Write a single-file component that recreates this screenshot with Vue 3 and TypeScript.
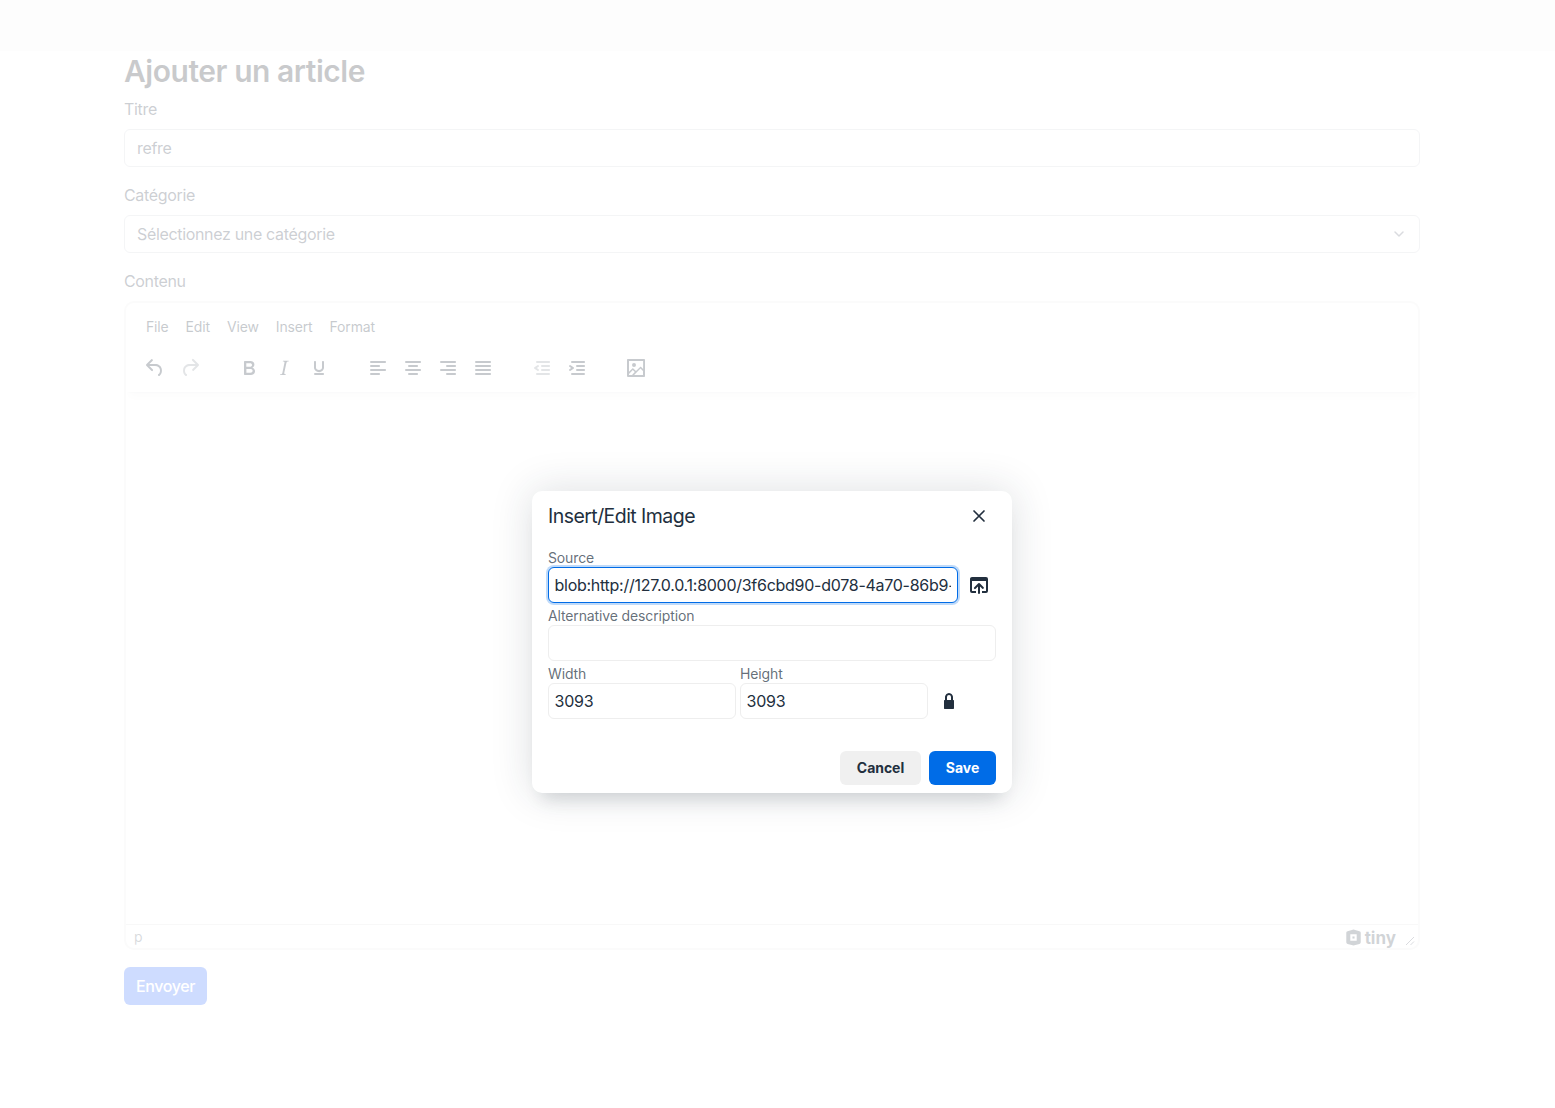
<script setup lang="ts">
interface Tool { d: string; off?: boolean; w?: number }
const A = 'M5 5h14c.6 0 1 .4 1 1s-.4 1-1 1H5a1 1 0 1 1 0-2Z'
const menus: string[] = ['File', 'Edit', 'View', 'Insert', 'Format']
const groups: Tool[][] = [
  [
    { d: 'M6.4 8H12c3.7 0 6.2 2 6.8 5.1.6 2.7-.4 5.6-2.3 6.8a1 1 0 0 1-1-1.8c1.1-.6 1.8-2.7 1.4-4.6-.5-2.1-2.1-3.5-4.9-3.5H6.4l3.3 3.3a1 1 0 1 1-1.4 1.4l-5-5a1 1 0 0 1 0-1.4l5-5a1 1 0 0 1 1.4 1.4L6.4 8Z' },
    { d: 'M17.6 10H12c-2.8 0-4.4 1.4-4.9 3.5-.4 2 .3 4 1.4 4.6a1 1 0 1 1-1 1.8c-2-1.2-2.9-4.1-2.3-6.8.6-3 3-5.1 6.8-5.1h5.6l-3.3-3.3a1 1 0 1 1 1.4-1.4l5 5a1 1 0 0 1 0 1.4l-5 5a1 1 0 0 1-1.4-1.4l3.3-3.3Z', off: true },
  ],
  [
    { d: 'M7.8 19c-.3 0-.5 0-.6-.2l-.2-.5V5.7c0-.2 0-.4.2-.5l.6-.2h5c1.5 0 2.7.3 3.5 1 .7.6 1.1 1.4 1.1 2.5a3 3 0 0 1-.6 1.9c-.4.6-1 1-1.6 1.2.4.1.9.3 1.3.6s.8.7 1 1.2c.4.4.5 1 .5 1.6 0 1.3-.4 2.3-1.3 3-.8.7-2.1 1-3.8 1H7.8Zm5-8.3c.6 0 1.2-.1 1.6-.5.4-.3.6-.7.6-1.3 0-1.1-.8-1.7-2.3-1.7H9.3v3.5h3.4Zm.5 6c.7 0 1.3-.1 1.7-.4.4-.4.6-.9.6-1.5s-.2-1-.7-1.4c-.4-.3-1-.4-2-.4H9.4v3.8h4Z' },
    { d: 'm16.7 4.7-.1.9h-.3c-.6 0-1 0-1.4.3-.3.3-.4.6-.5 1.1l-2.1 9.8v.6c0 .5.4.8 1.4.8h.2l-.2.8H8l.2-.8h.2c1.1 0 1.8-.5 2-1.5l2-9.8.1-.5c0-.6-.4-.8-1.4-.8h-.3l.2-.9h5.8Z' },
    { d: 'M16 5c.6 0 1 .4 1 1v5.5a4 4 0 0 1-.4 1.8l-1 1.4a5.3 5.3 0 0 1-5.5 1 5 5 0 0 1-1.6-1c-.5-.4-.8-.9-1.1-1.4a4 4 0 0 1-.4-1.8V6c0-.6.4-1 1-1s1 .4 1 1v5.5c0 .3 0 .6.2 1l.6.7a3.3 3.3 0 0 0 2.2.8 3.4 3.4 0 0 0 2.2-.8c.3-.2.4-.5.6-.8l.2-.9V6c0-.6.4-1 1-1ZM8 17h8c.6 0 1 .4 1 1s-.4 1-1 1H8a1 1 0 0 1 0-2Z' },
  ],
  [
    { d: A + 'M5 9h8c.6 0 1 .4 1 1s-.4 1-1 1H5a1 1 0 1 1 0-2Zm0 8h8c.6 0 1 .4 1 1s-.4 1-1 1H5a1 1 0 0 1 0-2Zm0-4h14c.6 0 1 .4 1 1s-.4 1-1 1H5a1 1 0 0 1 0-2Z' },
    { d: A + 'M8 9h8c.6 0 1 .4 1 1s-.4 1-1 1H8a1 1 0 1 1 0-2Zm0 8h8c.6 0 1 .4 1 1s-.4 1-1 1H8a1 1 0 0 1 0-2Zm-3-4h14c.6 0 1 .4 1 1s-.4 1-1 1H5a1 1 0 0 1 0-2Z' },
    { d: A + 'M11 9h8c.6 0 1 .4 1 1s-.4 1-1 1h-8a1 1 0 0 1 0-2Zm0 8h8c.6 0 1 .4 1 1s-.4 1-1 1h-8a1 1 0 0 1 0-2Zm-6-4h14c.6 0 1 .4 1 1s-.4 1-1 1H5a1 1 0 0 1 0-2Z' },
    { d: A + 'M5 9h14c.6 0 1 .4 1 1s-.4 1-1 1H5a1 1 0 1 1 0-2Zm0 4h14c.6 0 1 .4 1 1s-.4 1-1 1H5a1 1 0 0 1 0-2Zm0 4h14c.6 0 1 .4 1 1s-.4 1-1 1H5a1 1 0 0 1 0-2Z' },
  ],
  [
    { d: 'M7 5h12c.6 0 1 .4 1 1s-.4 1-1 1H7a1 1 0 1 1 0-2Zm5 4h7c.6 0 1 .4 1 1s-.4 1-1 1h-7a1 1 0 0 1 0-2Zm0 4h7c.6 0 1 .4 1 1s-.4 1-1 1h-7a1 1 0 0 1 0-2Zm-5 4h12a1 1 0 0 1 0 2H7a1 1 0 0 1 0-2Zm1.6-3.8a1 1 0 0 1-1.2 1.6l-3-2a1 1 0 0 1 0-1.6l3-2a1 1 0 0 1 1.2 1.6L6.8 12l1.8 1.2Z', off: true },
    { d: 'M7 5h12c.6 0 1 .4 1 1s-.4 1-1 1H7a1 1 0 1 1 0-2Zm5 4h7c.6 0 1 .4 1 1s-.4 1-1 1h-7a1 1 0 0 1 0-2Zm0 4h7c.6 0 1 .4 1 1s-.4 1-1 1h-7a1 1 0 0 1 0-2Zm-5 4h12a1 1 0 0 1 0 2H7a1 1 0 0 1 0-2Zm-2.6-3.8L6.2 12l-1.8-1.2a1 1 0 0 1 1.2-1.6l3 2a1 1 0 0 1 0 1.6l-3 2a1 1 0 1 1-1.2-1.6Z' },
  ],
  [
    { d: 'm5 15.7 3.3-3.2c.3-.3.7-.3 1 0L12 15l4.1-4c.3-.4.8-.4 1 0l2 1.9V5H5v10.7ZM5 18V19h3l2.8-2.9-2-2L5 17.9Zm14-3-2.5-2.4-6.4 6.5H19v-4ZM4 3h16c.6 0 1 .4 1 1v16c0 .6-.4 1-1 1H4a1 1 0 0 1-1-1V4c0-.6.4-1 1-1Zm6 8a2 2 0 1 0 0-4 2 2 0 0 0 0 4Z' },
  ],
]
</script>

<template>
  <div class="page">
    <header class="topbar"></header>
    <main class="content">
      <h1 class="title">Ajouter un article</h1>
      <label class="label">Titre</label>
      <input class="field" value="refre" readonly />
      <label class="label">Catégorie</label>
      <div class="field select">
        <span>Sélectionnez une catégorie</span>
        <svg width="20" height="20" viewBox="0 0 20 20" fill="none">
          <path d="M6 8l4 4 4-4" stroke="#6b7280" stroke-width="1.5" stroke-linecap="round" stroke-linejoin="round" />
        </svg>
      </div>
      <label class="label">Contenu</label>
      <div class="editor">
        <div class="editor-head">
          <nav class="menubar">
            <span v-for="m in menus" :key="m">{{ m }}</span>
          </nav>
          <div class="toolbar">
            <div v-for="(g, i) in groups" :key="i" class="tool-group">
              <span v-for="(t, j) in g" :key="j" class="tool" :class="{ off: t.off }">
                <svg width="24" height="24" viewBox="0 0 24 24"><path :d="t.d" fill="currentColor" fill-rule="evenodd" /></svg>
              </span>
            </div>
          </div>
        </div>
        <div class="editor-body"></div>
        <div class="statusbar">
          <span class="path">p</span>
          <span class="brand">
            <svg width="17" height="17" viewBox="0 0 16 16">
              <path d="M8 .5 13.6 2a1.6 1.6 0 0 1 1.2 1.6v8.8a1.6 1.6 0 0 1-1.2 1.6L8 15.5 2.4 14a1.6 1.6 0 0 1-1.2-1.6V3.600A1.600 1.600 0 0 1 2.400 2L8 .5ZM5 5v6h6V5H5Z" fill="currentColor" fill-rule="evenodd" />
              <rect x="7" y="7" width="2" height="2" fill="currentColor" />
            </svg>
            <span>tiny</span>
          </span>
          <svg class="grip" width="10" height="10" viewBox="0 0 10 10">
            <path d="M1 9 9 1M5.500 9 9 5.500" stroke="currentColor" stroke-width="1" fill="none" />
          </svg>
        </div>
      </div>
      <button class="send" type="button">Envoyer</button>
    </main>

    <div class="backdrop"></div>

    <section class="dialog">
      <div class="dialog-head">
        <h2>Insert/Edit Image</h2>
        <svg class="close" width="24" height="24" viewBox="0 0 24 24"><path d="M7 7 17 17M17 7 7 17" stroke="currentColor" stroke-width="1.7" stroke-linecap="round" fill="none" /></svg>
      </div>
      <div class="dialog-body">
        <label class="dlabel">Source</label>
        <div class="source-row">
          <input class="dinput focus" value="blob:http://127.0.0.1:8000/3f6cbd90-d078-4a70-86b9-4f1e5c2a7d10" readonly />
          <span class="icon-btn">
            <svg width="24" height="24" viewBox="0 0 24 24"><path d="M19 4a2 2 0 0 1 2 2v12a2 2 0 0 1-2 2h-4v-2h4V8H5v10h4v2H5a2 2 0 0 1-2-2V6c0-1.100.9-2 2-2h14Zm-8 9.400-2.300 2.300a1 1 0 1 1-1.400-1.400l4-4a1 1 0 0 1 1.400 0l4 4a1 1 0 0 1-1.400 1.400L13 13.400V20a1 1 0 0 1-2 0v-6.600Z" fill="currentColor" fill-rule="evenodd" /></svg>
          </span>
        </div>
        <label class="dlabel">Alternative description</label>
        <input class="dinput" value="" readonly />
        <div class="size-row">
          <div class="size-cell">
            <label class="dlabel">Width</label>
            <input class="dinput" value="3093" readonly />
          </div>
          <div class="size-cell">
            <label class="dlabel">Height</label>
            <input class="dinput" value="3093" readonly />
          </div>
          <span class="lock">
            <svg width="24" height="24" viewBox="0 0 24 24"><path d="M16.300 11c.2 0 .3 0 .5.2l.2.6v7.400c0 .3 0 .4-.2.6l-.6.2H7.800c-.3 0-.4 0-.6-.2a.7.7 0 0 1-.2-.6v-7.400c0-.3 0-.4.2-.6l.5-.2H8V8c0-.8.3-1.500.7-2.100.5-.7 1-1.200 1.700-1.500a4 4 0 0 1 3.200 0c.7.3 1.200.8 1.700 1.500.4.6.7 1.300.7 2v3h.3ZM10 8v3h4V8a2 2 0 0 0-2-2 2 2 0 0 0-2 2Z" fill="currentColor" fill-rule="evenodd" /></svg>
          </span>
        </div>
      </div>
      <div class="dialog-foot">
        <button class="btn cancel" type="button">Cancel</button>
        <button class="btn save" type="button">Save</button>
      </div>
    </section>
  </div>
</template>

<style>
html, body { margin: 0; background: #fff; }
</style>

<style scoped>
.page {
  position: relative;
  height: 1108px;
  overflow: hidden;
  font-family: Inter, "Noto Sans", sans-serif;
  color: #111827;
}
.topbar { height: 51px; background: #f8f8f8; }
.content { width: 1296px; margin-left: 124px; display: flex; flex-direction: column; }
.title { margin: 2px 0 8px; font-size: 30px; line-height: 36px; font-weight: 600; letter-spacing: -0.46px; color: #2b2f36; }
.label { display: block; font-size: 16px; line-height: 24px; color: #374151; margin-bottom: 8px; letter-spacing: -0.33px; }
.field {
  box-sizing: border-box;
  width: 100%;
  height: 38px;
  padding: 0 12px;
  margin: 0 0 16px;
  border: 1px solid #d1d5db;
  border-radius: 6px;
  background: #fff;
  font: 16px/24px Inter, sans-serif;
  letter-spacing: -0.33px;
  color: #374151;
  outline: none;
}
.select { display: flex; align-items: center; justify-content: space-between; color: #374151; padding-right: 10px; }
.editor {
  box-sizing: border-box;
  height: 649px;
  border: 2px solid #eee;
  border-radius: 10px;
  display: flex;
  flex-direction: column;
  overflow: hidden;
  color: #222f3e;
}
.editor-head { height: 89px; box-shadow: 0 2px 2px -2px rgba(34, 47, 62, .1), 0 8px 8px -4px rgba(34, 47, 62, .07); padding-top: 4px; box-sizing: border-box; }
.menubar { display: flex; gap: 17px; padding-left: 20px; height: 40px; align-items: center; font-size: 14px; line-height: 20px; letter-spacing: -0.15px; }
.toolbar { display: flex; gap: 25px; padding: 4px 0 0 12px; }
.tool-group { display: flex; gap: 1px; }
.tool { width: 34px; height: 34px; display: flex; align-items: center; justify-content: center; color: #222f3e; }
.tool.off { color: rgba(34, 47, 62, .5); }
.editor-body { flex: 1; }
.statusbar {
  height: 24px;
  box-sizing: border-box;
  border-top: 1px solid #e3e3e3;
  display: flex;
  align-items: center;
  padding: 0 3px 0 8px;
  font-size: 14px;
  color: rgba(34, 47, 62, .7);
}
.path { flex: 1; }
.brand { display: flex; align-items: center; gap: 2.500px; font-size: 17px; font-weight: 700; color: #4a5562; margin: 2px 9px 0 0; }
.grip { color: #6b7280; margin-top: 8px; }
.send {
  width: 83px;
  height: 38px;
  margin-top: 17px;
  border: 0;
  border-radius: 6px;
  background: #3f74ff;
  color: #fff;
  font: 500 16px/24px Inter, sans-serif;
  letter-spacing: -0.4px;
  padding: 0;
}
.backdrop { position: absolute; inset: 0; background: rgba(255, 255, 255, .75); }
.dialog {
  position: absolute;
  left: 532px;
  top: 491px;
  width: 480px;
  height: 302px;
  box-sizing: border-box;
  background: #fff;
  border-radius: 10px;
  box-shadow: 0 16px 16px -10px rgba(34, 47, 62, .15), 0 0 40px 1px rgba(34, 47, 62, .15);
  color: #222f3e;
  display: flex;
  flex-direction: column;
}
.dialog-head { display: flex; align-items: center; justify-content: space-between; padding: 8px 21px 0 16px; height: 42px; box-sizing: border-box; margin-bottom: 16px; }
.dialog-head h2 { margin: 0; font-size: 19.5px; line-height: 34px; font-weight: 400; letter-spacing: -0.55px; }
.close { display: block; }
.dialog-body { padding: 0 16px; flex: 1; }
.dlabel { display: block; font-size: 14px; line-height: 17px; color: rgba(34, 47, 62, .7); margin-bottom: 1px; letter-spacing: -0.13px; }
.dinput {
  display: block;
  box-sizing: border-box;
  width: 100%;
  height: 36px;
  padding: 5px 6px 5px 5.500px;
  border: 1px solid #eee;
  border-radius: 6px;
  background: #fff;
  font: 16px/24px Inter, sans-serif;
  letter-spacing: -0.23px;
  color: #222f3e;
  outline: none;
  margin: 0 0 4px;
}
.dinput.focus { border-color: #006ce7; box-shadow: 0 0 0 2px rgba(0, 108, 231, .25); letter-spacing: -0.27px; }
.source-row { display: flex; align-items: flex-start; }
.source-row .dinput { width: 410px; flex: none; }
.icon-btn { width: 42px; height: 36px; flex: none; display: flex; align-items: center; justify-content: center; color: #222f3e; }
.size-row { display: flex; gap: 4px; align-items: flex-end; }
.size-cell { width: 188px; }
.lock { width: 34px; height: 36px; margin-bottom: 4px; display: flex; align-items: center; justify-content: center; }
.dialog-foot { display: flex; justify-content: flex-end; gap: 8px; padding: 0 16px 8px; }
.btn {
  height: 34px;
  border: 0;
  border-radius: 6px;
  font: 700 14px/20px Inter, sans-serif;
  letter-spacing: -0.05px;
  padding: 0 16px;
}
.cancel { background: #f0f0f0; color: #222f3e; width: 81px; }
.save { background: #006ce7; color: #fff; width: 67px; }
</style>
